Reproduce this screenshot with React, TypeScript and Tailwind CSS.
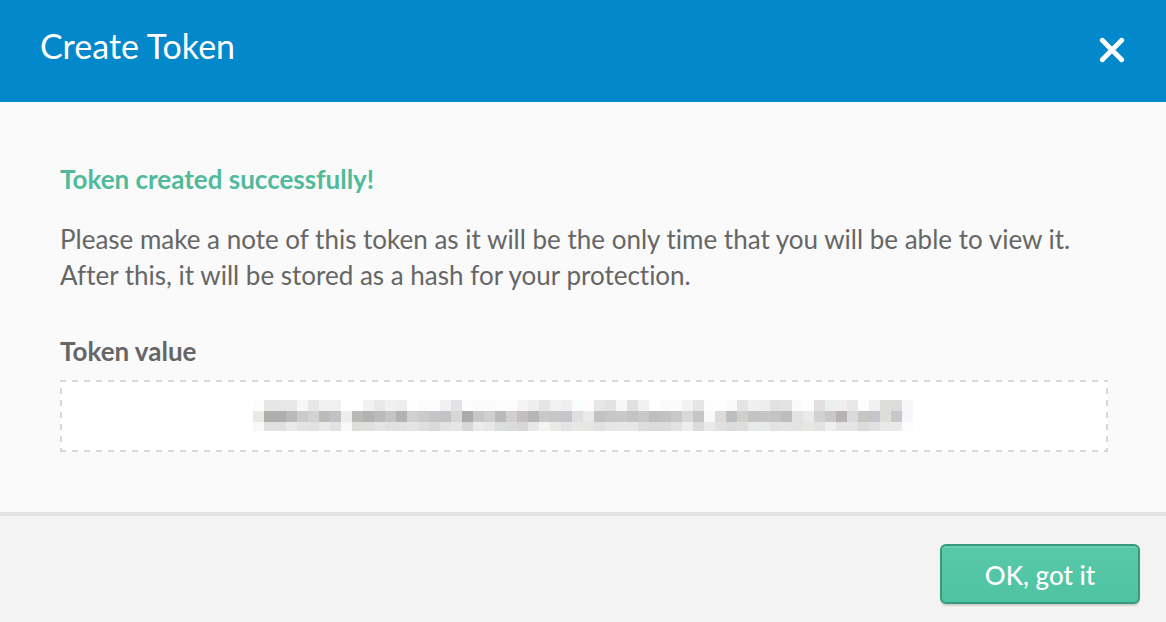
const CELL = 11;

// Colours of the redacted token, one list per mosaic row, left to right.
const MOSAIC: { height: number; colors: string[] }[] = [
  {
    height: 11,
    colors:
      'fcfcfa e6e6e6 e7e7e5 e8e8e8 f7f7f7 e7e7e7 f0f0f0 f0f0f0 ffffff ffffff f3f1f3 e9e9e9 f0f0f0 ecedef fefefe fcfcfc fdfdfd f1eff1 e0e2e4 fdfdfd fbfbfb fbfbfb fcfcfc fcfcfc f6f4f2 eeeeee e5e5e5 f0f3f2 eeeeee f9fdfb fdfdfd e6e6e6 e2e2e2 f7f7f7 e0e0e0 f1f1f1 ffffff fbfbfb fbfbfb f2f2f2 e5e5e5 fdfdfd fefefe fafaf8 e4e4e4 f0f0f0 eeeeec e1e1e1 e3e3e3 f8fbfa fdfdfd e0e0e0 eaeeed efedee e8e8e8 fdfdfd f0f0f0 ddddda dcdcdc f7f7fa'.split(' '),
  },
  {
    height: 11,
    colors:
      'e9e9e7 b0aeac acafad b8b9b9 cbcbcb d2d2d2 bbbbb9 c1c2c5 ededed b9bab8 b2b2b2 bababa c4c4c4 b0b2b4 d0d0d0 cacccb c5c5c5 c1c3c6 d7d7d7 ababab c7c7c7 cfcfcd bababa d0d0d0 c3bfc0 b6b6b6 c7cac9 c6c6c8 c6c6ca dde0df eaeae8 c2c2c2 c6c6c6 c8c8c8 c3c3c3 c8c8c8 bebebe c2c2c2 c9c9c9 d9d9d9 c6c6c6 f7f9fb dddad8 bcbec0 cfcfcc c3c3c3 c5c5c5 c3c3c3 bdbdbd e1e3e7 eaeaea d2d2d2 c8c8c8 b5b1b5 d8dadd c8c6c4 c4c5ca deded9 c8c8c8 f5f6fa'.split(' '),
  },
  {
    height: 9,
    colors:
      'f9f8f6 e0e0e0 e0e0e0 eaeaea e3e3e3 e1e1e1 e9e9e9 e2e2e2 f8f8f8 dededb dde0de e4e4e4 e1e1e1 e2e2e2 e5e5e5 dfdfdf dadada e0e3e2 e6e6e6 d6d6d6 ebebee e9e7e5 dbdedd dadcda d7d7da e8e8e8 f4f4f4 eaeae7 e4e4e4 e8e8e8 e6e6e3 e1e1e1 e6e6e6 e8e8e8 e7e7e7 dedede dcdcdc dcdcdc e1e4e3 eeeeee dcdbd9 eaeaea e1e1e1 dcdcdc dddddb e9e9e9 e7ebea e3e3e3 e5e5e5 e3e3e3 e6e6e3 e3e3e3 eeeeee e4e4e4 e4e4e4 dcdcda e1e1e1 eaeaea eaeaea fafdfc'.split(' '),
  },
];

function RedactedToken() {
  return (
    <svg width="662" height="32" viewBox="0 0 662 32" shapeRendering="crispEdges" aria-hidden="true">
      {MOSAIC.map((row, r) =>
        row.colors.map((color, c) => (
          <rect key={`${r}-${c}`} x={c * CELL} y={r * 11} width={CELL} height={row.height} fill={`#${color}`} />
        )),
      )}
    </svg>
  );
}

function CloseIcon() {
  return (
    <svg
      width="28"
      height="26"
      viewBox="0 0 28 26"
      fill="none"
      stroke="currentColor"
      strokeWidth="4.8"
      strokeLinecap="round"
      aria-hidden="true"
    >
      <path d="M4.3 3.3 23.7 22.7M23.7 3.3 4.3 22.7" />
    </svg>
  );
}

export default function App() {
  return (
    <div
      role="dialog"
      aria-labelledby="dialog-title"
      className="flex min-h-screen flex-col bg-[#fafafa] font-['Lato',sans-serif] text-[#666666] [font-variant-ligatures:none]"
    >
      <header className="flex items-start justify-between bg-[#0388cb] px-10 pt-6 pb-[34px] text-white">
        <h1 id="dialog-title" className="text-[34px] leading-[44px]">
          Create Token
        </h1>
        <button type="button" aria-label="Close" className="mt-[13px]">
          <CloseIcon />
        </button>
      </header>

      <main className="grow px-[60px] pt-[59px] pb-[60px] text-[26px] leading-9">
        <h2 className="font-bold text-[#50ba9b]">Token created successfully!</h2>
        <p className="mt-6">
          Please make a note of this token as it will be the only time that you will be able to view it. After this, it
          will be stored as a hash for your protection.
        </p>
        <h3 id="token-label" className="mt-10 font-bold">
          Token value
        </h3>
        <output
          aria-labelledby="token-label"
          className="-mr-0.5 mt-[11px] flex h-[72px] items-center justify-center bg-white bg-[image:linear-gradient(90deg,#d8d8d8_50%,transparent_50%),linear-gradient(90deg,#d8d8d8_50%,transparent_50%),linear-gradient(#d8d8d8_50%,transparent_50%),linear-gradient(#d8d8d8_50%,transparent_50%)] bg-[size:12px_2px,12px_2px,2px_12px,2px_12px] bg-[position:0_0,0_100%,0_-4px,100%_-4px] [background-repeat:repeat-x,repeat-x,repeat-y,repeat-y]"
        >
          <RedactedToken />
        </output>
      </main>

      <footer className="flex justify-end border-t-4 border-[#e1e1e1] bg-[#f3f3f3] px-[26px] pt-7 pb-[18px]">
        <button
          type="button"
          className="h-[60px] w-[200px] rounded-md border-2 border-[#36997b] bg-linear-to-b from-[#58c9a9] to-[#4fc3a2] pt-0.5 text-[26px] leading-9 font-medium text-white shadow-[0_2px_1px_#d0d0d0,inset_0_2px_0_#6bcfb3]"
        >
          OK, got it
        </button>
      </footer>
    </div>
  );
}
